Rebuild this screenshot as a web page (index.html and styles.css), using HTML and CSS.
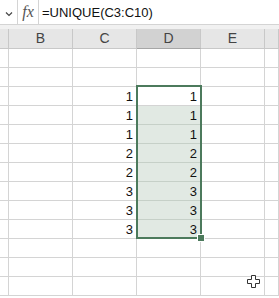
FILE: index.html
```html
<!DOCTYPE html>
<html lang="en">
<head>
    <meta charset="UTF-8">
    <meta name="viewport" content="width=device-width, initial-scale=1.0">
    <title>UNIQUE</title>
    <link rel="stylesheet" href="styles.css">
</head>
<body>
    <div class="formula-bar">
        <div class="name-box">
            <svg class="chevron" width="8" height="6" viewBox="0 0 8 6"><path d="M1 1.5 L4 4.5 L7 1.5" fill="none" stroke="#444" stroke-width="1.2"/></svg>
        </div>
        <div class="fx">fx</div>
        <div class="formula">=UNIQUE(C3:C10)</div>
    </div>
    <div class="band"></div>
    <div class="sheet">
        <div class="hd"></div><div class="hd">B</div><div class="hd">C</div><div class="hd hd-sel">D</div><div class="hd">E</div><div class="hd"></div>

        <div class="c"></div><div class="c"></div><div class="c"></div><div class="c"></div><div class="c"></div><div class="c"></div>
        <div class="c"></div><div class="c"></div><div class="c"></div><div class="c"></div><div class="c"></div><div class="c"></div>
        <div class="c"></div><div class="c"></div><div class="c">1</div><div class="c">1</div><div class="c"></div><div class="c"></div>
        <div class="c"></div><div class="c"></div><div class="c">1</div><div class="c sel">1</div><div class="c"></div><div class="c"></div>
        <div class="c"></div><div class="c"></div><div class="c">1</div><div class="c sel">1</div><div class="c"></div><div class="c"></div>
        <div class="c"></div><div class="c"></div><div class="c">2</div><div class="c sel">2</div><div class="c"></div><div class="c"></div>
        <div class="c"></div><div class="c"></div><div class="c">2</div><div class="c sel">2</div><div class="c"></div><div class="c"></div>
        <div class="c"></div><div class="c"></div><div class="c">3</div><div class="c sel">3</div><div class="c"></div><div class="c"></div>
        <div class="c"></div><div class="c"></div><div class="c">3</div><div class="c sel">3</div><div class="c"></div><div class="c"></div>
        <div class="c"></div><div class="c"></div><div class="c">3</div><div class="c sel">3</div><div class="c"></div><div class="c"></div>
        <div class="c"></div><div class="c"></div><div class="c"></div><div class="c"></div><div class="c"></div><div class="c"></div>
        <div class="c"></div><div class="c"></div><div class="c"></div><div class="c"></div><div class="c"></div><div class="c"></div>
        <div class="c"></div><div class="c"></div><div class="c"></div><div class="c"></div><div class="c"></div><div class="c"></div>

        <div class="selection"><span class="handle"></span></div>
        <svg class="cursor" width="15" height="15" viewBox="0 0 15 15">
            <path d="M5.5 1.5 H9.5 V5.5 H13.5 V9.5 H9.5 V13.5 H5.5 V9.5 H1.5 V5.5 H5.5 Z" fill="#fff" stroke="#333" stroke-width="1"/>
        </svg>
    </div>
</body>
</html>
```

FILE: styles.css
```css
body{
    margin: 0;
    background: #fff;
    overflow: hidden;
    font-family: "Liberation Sans", Arial, sans-serif;
}
.formula-bar{
    display: flex;
    height: 24px;
    background: #fff;
}
.name-box{
    width: 18px;
    display: flex;
    align-items: center;
    justify-content: center;
    padding-top: 3px;
    box-sizing: border-box;
    border-right: 1px solid #d4d4d4;
}
.chevron{
    display: block;
}
.fx{
    width: 20px;
    border-right: 1px solid #d4d4d4;
    font-family: "Liberation Serif", serif;
    font-style: italic;
    font-size: 16px;
    color: #555;
    text-align: center;
    line-height: 23px;
}
.formula{
    padding-left: 3px;
    font-size: 13px;
    line-height: 25px;
    color: #111;
}
.band{
    height: 5px;
    background: #f1f1f1;
    border-top: 1px solid #d4d4d4;
    box-sizing: border-box;
}
.sheet{
    position: relative;
    display: grid;
    grid-template-columns: 9px 64px 64px 64px 64px 1fr;
    grid-template-rows: 20px;
    grid-auto-rows: 19px;
}
.hd{
    background: #e6e6e6;
    border-right: 1px solid #c8c8c8;
    border-bottom: 1px solid #c8c8c8;
    font-size: 14px;
    color: #444;
    text-align: center;
    line-height: 19px;
}
.hd-sel{
    background: #d2d2d2;
    border-bottom-color: #a6a6a6;
}
.c{
    border-right: 1px solid #d4d4d4;
    border-bottom: 1px solid #d4d4d4;
    font-size: 13px;
    color: #111;
    text-align: right;
    padding-right: 3px;
    line-height: 20px;
}
.sel{
    background: #e1e9e3;
    border-bottom-color: #c6d0c8;
}
.selection{
    position: absolute;
    left: 136px;
    top: 56px;
    width: 66px;
    height: 154px;
    border: 2px solid #4c7a5c;
    box-sizing: border-box;
}
.handle{
    position: absolute;
    right: -5px;
    bottom: -5px;
    width: 6px;
    height: 6px;
    background: #4c7a5c;
    border: 1px solid #fff;
}
.cursor{
    position: absolute;
    left: 246px;
    top: 245px;
}
```
